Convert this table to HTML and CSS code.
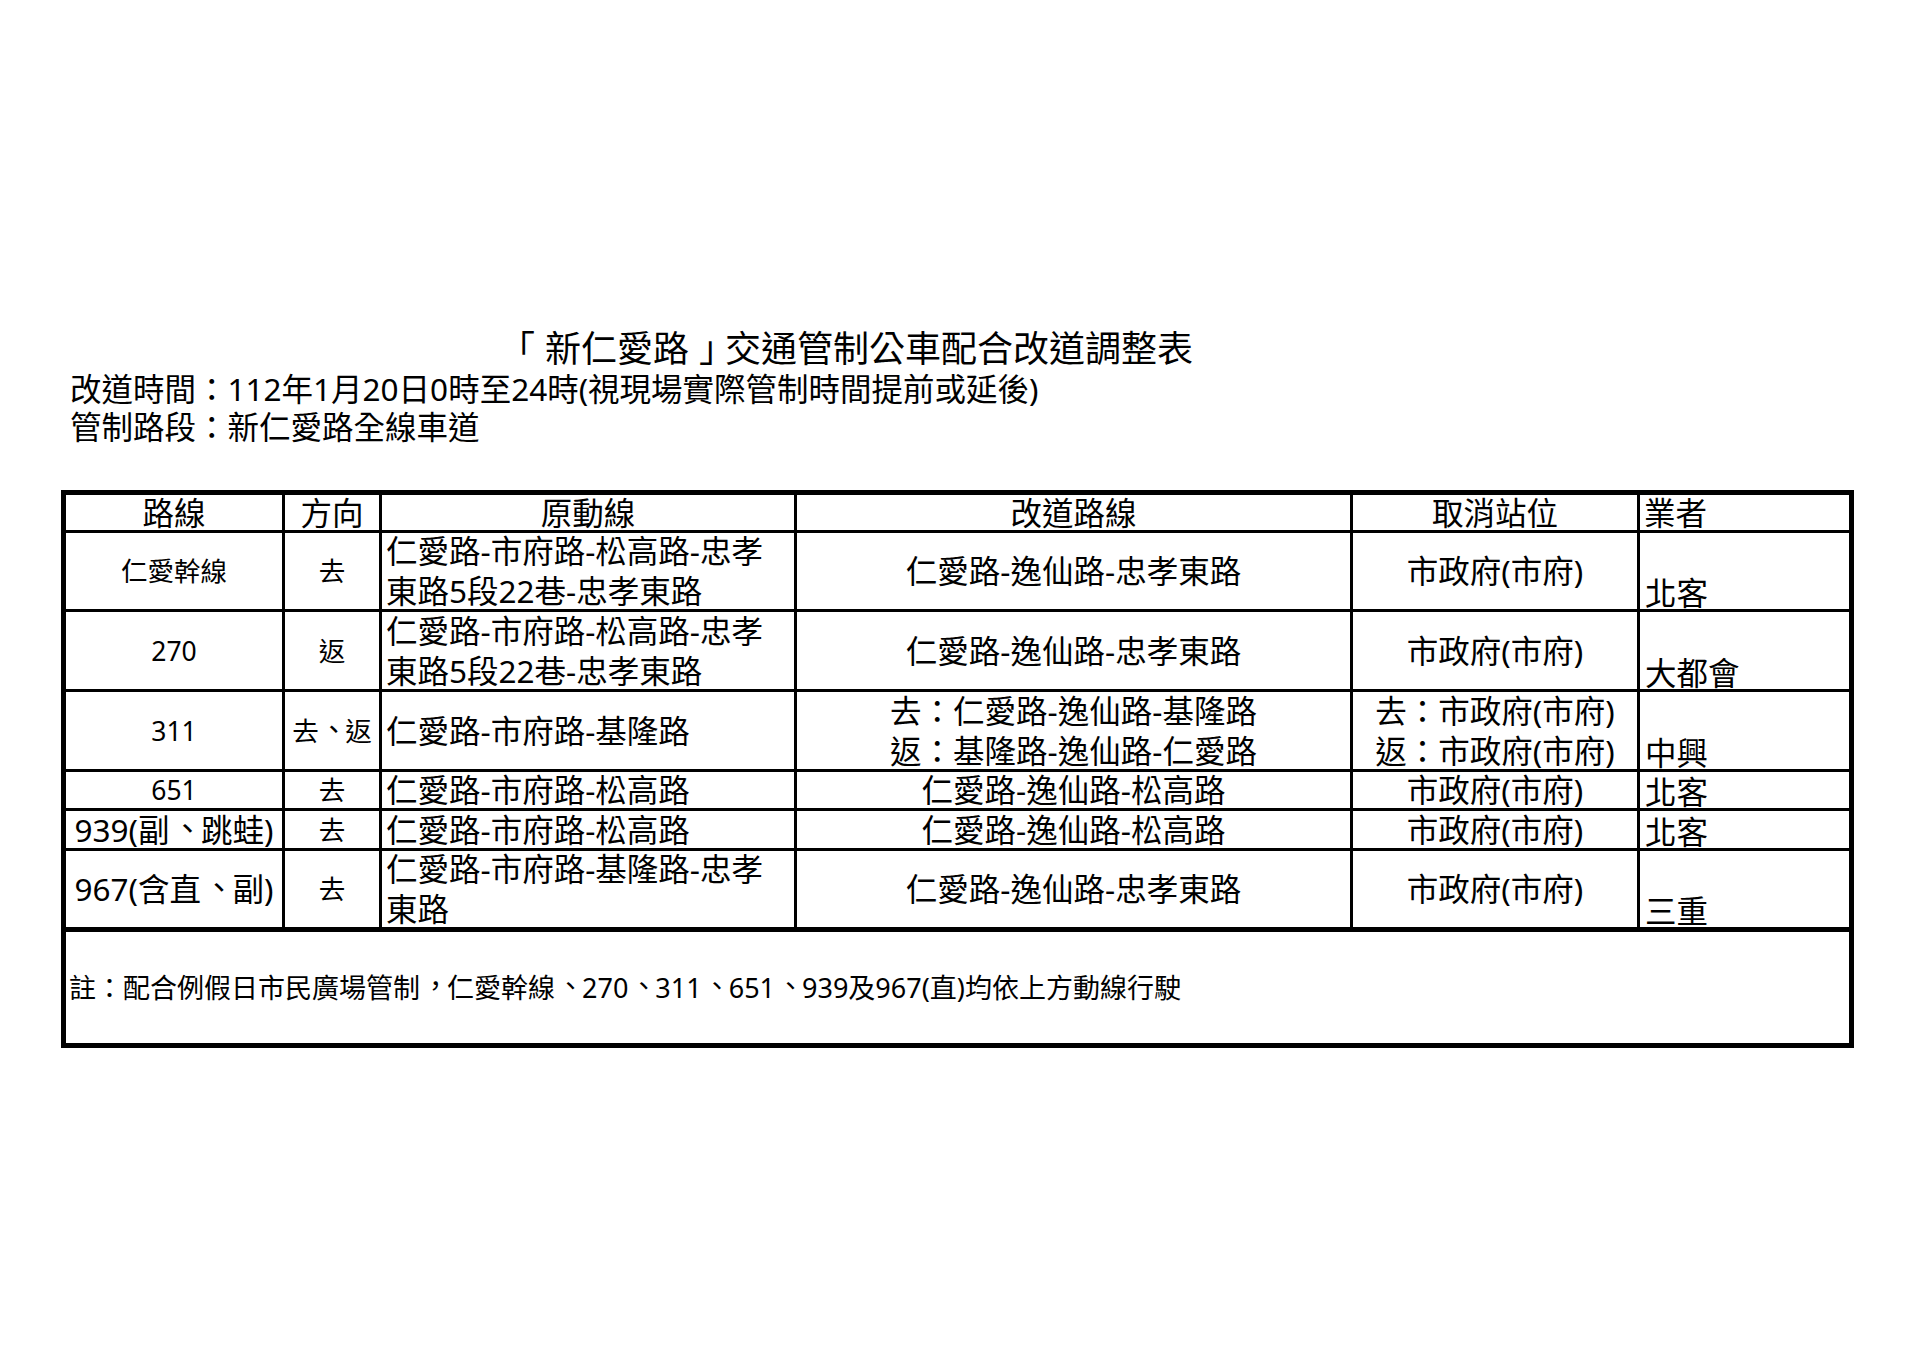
FILE: index.html
```html
<!DOCTYPE html>
<html lang="zh-Hant">
<head>
<meta charset="utf-8">
<title>「新仁愛路」交通管制公車配合改道調整表</title>
<link rel="stylesheet" href="styles.css">
</head>
<body>
<div class="page">
  <header class="head">
    <h1 class="title"><span class="bo">「</span>新仁愛路<span class="bc">」</span>交通管制公車配合改道調整表</h1>
    <p class="meta">改道時間：112年1月20日0時至24時(視現場實際管制時間提前或延後)</p>
    <p class="meta">管制路段：新仁愛路全線車道</p>
  </header>

  <div class="sheet">
    <div class="c hd">路線</div>
    <div class="c hd">方向</div>
    <div class="c hd">原動線</div>
    <div class="c hd">改道路線</div>
    <div class="c hd">取消站位</div>
    <div class="c hd left">業者</div>

    <div class="c sm">仁愛幹線</div>
    <div class="c sm">去</div>
    <div class="c left"><span>仁愛路-市府路-松高路-忠孝<br>東路5段22巷-忠孝東路</span></div>
    <div class="c">仁愛路-逸仙路-忠孝東路</div>
    <div class="c">市政府(市府)</div>
    <div class="c op">北客</div>

    <div class="c sm">270</div>
    <div class="c sm">返</div>
    <div class="c left"><span>仁愛路-市府路-松高路-忠孝<br>東路5段22巷-忠孝東路</span></div>
    <div class="c">仁愛路-逸仙路-忠孝東路</div>
    <div class="c">市政府(市府)</div>
    <div class="c op">大都會</div>

    <div class="c sm">311</div>
    <div class="c sm"><span>去<i class="pc">、</i>返</span></div>
    <div class="c left">仁愛路-市府路-基隆路</div>
    <div class="c"><span>去：仁愛路-逸仙路-基隆路<br>返：基隆路-逸仙路-仁愛路</span></div>
    <div class="c"><span>去：市政府(市府)<br>返：市政府(市府)</span></div>
    <div class="c op">中興</div>

    <div class="c sm">651</div>
    <div class="c sm">去</div>
    <div class="c left">仁愛路-市府路-松高路</div>
    <div class="c">仁愛路-逸仙路-松高路</div>
    <div class="c">市政府(市府)</div>
    <div class="c op">北客</div>

    <div class="c"><span>939(副<i class="pc">、</i>跳蛙)</span></div>
    <div class="c sm">去</div>
    <div class="c left">仁愛路-市府路-松高路</div>
    <div class="c">仁愛路-逸仙路-松高路</div>
    <div class="c">市政府(市府)</div>
    <div class="c op">北客</div>

    <div class="c"><span>967(含直<i class="pc">、</i>副)</span></div>
    <div class="c sm">去</div>
    <div class="c left"><span>仁愛路-市府路-基隆路-忠孝<br>東路</span></div>
    <div class="c">仁愛路-逸仙路-忠孝東路</div>
    <div class="c">市政府(市府)</div>
    <div class="c op">三重</div>

    <div class="c note"><span>註：配合例假日市民廣場管制<i class="pc">，</i>仁愛幹線<i class="pc">、</i>270<i class="pc">、</i>311<i class="pc">、</i>651<i class="pc">、</i>939及967(直)均依上方動線行駛</span></div>
  </div>
</div>
</body>
</html>
```

FILE: styles.css
```css
html, body {
  margin: 0;
  padding: 0;
  background: #ffffff;
}

body {
  font-family: "Noto Sans", "Noto Sans CJK TC", sans-serif;
  color: #000000;
}

.page {
  width: 1917px;
  min-height: 1355px;
}

.head {
  padding-top: 327px;
}

.title {
  margin: 0;
  padding-left: 509px;
  font-size: 36px;
  font-weight: 400;
  line-height: 43px;
  white-space: nowrap;
}

.bo,
.bc {
  display: inline-block;
}

.bo {
  transform: translateX(-0.28em);
}

.bc {
  transform: translateX(0.28em);
}

.pc {
  display: inline-block;
  font-style: normal;
  transform: translate(0.07em, -0.07em);
}

.meta {
  margin: 0;
  padding-left: 70px;
  font-size: 31.5px;
  line-height: 38px;
  white-space: nowrap;
}

.sheet {
  display: grid;
  grid-template-columns: 216px 94px 412px 553px 284px 209px;
  grid-template-rows: 35px 76px 77px 77px 36px 37px 76px 113px;
  gap: 3px;
  padding: 5px;
  margin: 44px 0 0 61px;
  width: max-content;
  background: #000000;
}

.c {
  background: #ffffff;
  display: flex;
  align-items: center;
  justify-content: center;
  text-align: center;
  font-size: 31.5px;
  line-height: 40px;
  white-space: nowrap;
  min-width: 0;
  min-height: 0;
}

.c > span {
  display: block;
}

.hd {
  line-height: 35px;
}

.sm {
  font-size: 26.5px;
}

.left {
  justify-content: flex-start;
  text-align: left;
  padding-left: 4px;
}

.op {
  justify-content: flex-start;
  align-items: flex-end;
  text-align: left;
  padding-left: 5px;
  line-height: 32px;
}

.note {
  grid-column: 1 / -1;
  justify-content: flex-start;
  text-align: left;
  padding-left: 3px;
  font-size: 27px;
  line-height: 36px;
  border-top: 2px solid #000000;
}
```
